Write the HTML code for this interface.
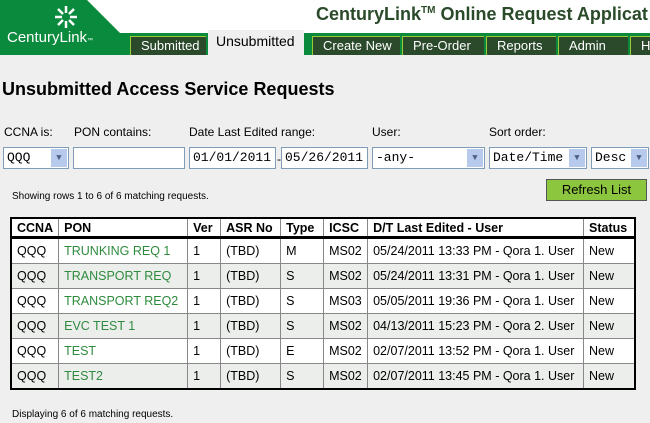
<!DOCTYPE html>
<html><head><style>
body{margin:0;width:650px;height:423px;overflow:hidden;background:#efefef;font-family:"Liberation Sans",Arial,sans-serif;position:relative}
.a{position:absolute}
.tab{position:absolute;top:36px;height:19px;background:#2b4a2b;color:#fff;font-size:13px;line-height:17px;padding-left:10px;box-sizing:border-box;border-top:1px solid #9c3;border-left:1px solid #9c3}
.lbl{position:absolute;top:124px;font-size:12px;color:#000}
.inp{position:absolute;top:147px;height:22px;background:#fff;border:1px solid #7f9db9;box-sizing:border-box;font-family:"Liberation Mono",monospace;font-size:13px;line-height:20px;padding-left:3px}
.dd{position:absolute;right:1px;top:1px;width:16px;height:18px;background:#b7c9ec;color:#4d6185;font-size:9px;text-align:center;line-height:18px}
table{position:absolute;left:10px;top:217px;border-collapse:collapse;font-size:12.5px;width:626px;border:2px solid #000}
td,th{border:1px solid #888;padding:0 5px;text-align:left;height:24px}
th{height:17px;font-weight:bold;border-bottom:3px solid #000;background:#fff}
tr.w td{background:#fff}
tr.g td{background:#eceeec}
td.p{color:#2e8b3e}
</style></head><body>
<div class="a" style="left:0;top:0;width:650px;height:55px;background:#fff"></div>
<svg class="a" style="left:0;top:0" width="650" height="56"><polygon points="0,0 87,0 120,33 650,33 650,55 0,55" fill="#0a8a3c"/></svg>
<svg class="a" style="left:54px;top:5px" width="24" height="24" viewBox="-12 -12 24 24"><g stroke="#fff" stroke-width="2.5">
<line x1="0" y1="-4" x2="0" y2="-11"/><line x1="0" y1="4" x2="0" y2="11"/><line x1="-4" y1="0" x2="-11" y2="0"/><line x1="4" y1="0" x2="11" y2="0"/>
<line x1="3" y1="-3" x2="8" y2="-8"/><line x1="-3" y1="3" x2="-8" y2="8"/><line x1="-3" y1="-3" x2="-8" y2="-8"/><line x1="3" y1="3" x2="8" y2="8"/></g></svg>
<div class="a" style="left:7px;top:29px;color:#fff;font-size:15px">CenturyLink<span style="font-size:6px">™</span></div>
<div class="a" style="left:316px;top:4px;color:#2a4a2a;font-size:18px;font-weight:bold;white-space:nowrap">CenturyLink<sup style="font-size:10px">TM</sup> Online Request Applicat</div>
<div class="tab" style="left:130px;width:76px">Submitted</div>
<div class="tab" style="left:208px;top:30px;height:25px;width:96px;background:#efefef;color:#000;border:none;padding-left:8px;font-size:14px;line-height:22px">Unsubmitted</div>
<div class="tab" style="left:312px;width:88px">Create New</div>
<div class="tab" style="left:402px;width:82px">Pre-Order</div>
<div class="tab" style="left:486px;width:70px">Reports</div>
<div class="tab" style="left:558px;width:70px">Admin</div>
<div class="tab" style="left:630px;width:30px">Help</div>
<div class="a" style="left:2px;top:79px;font-size:18px;font-weight:bold">Unsubmitted Access Service Requests</div>
<div class="lbl" style="left:4px;top:125px">CCNA is:</div>
<div class="lbl" style="left:74px;top:125px">PON contains:</div>
<div class="lbl" style="left:189px;top:125px">Date Last Edited range:</div>
<div class="lbl" style="left:372px;top:125px">User:</div>
<div class="lbl" style="left:489px;top:125px">Sort order:</div>
<div class="inp" style="left:3px;width:66px">QQQ<div class="dd">▼</div></div>
<div class="inp" style="left:73px;width:112px"></div>
<div class="inp" style="left:189px;width:87px">01/01/2011</div>
<div class="a" style="left:277px;top:152px;font-size:12px">-</div>
<div class="inp" style="left:281px;width:87px">05/26/2011</div>
<div class="inp" style="left:372px;width:113px">-any-<div class="dd">▼</div></div>
<div class="inp" style="left:489px;width:98px">Date/Time<div class="dd">▼</div></div>
<div class="inp" style="left:591px;width:58px">Desc<div class="dd">▼</div></div>
<div class="a" style="left:12px;top:191px;font-size:10px">Showing rows 1 to 6 of 6 matching requests.</div>
<div class="a" style="left:546px;top:179px;width:101px;height:22px;background:#8cc63f;border:1px solid #555;box-sizing:border-box;font-size:13px;text-align:center;line-height:20px">Refresh List</div>
<table>
<tr><th style="width:36px">CCNA</th><th style="width:118px">PON</th><th style="width:22px">Ver</th><th style="width:49px">ASR No</th><th style="width:32px">Type</th><th style="width:33px">ICSC</th><th>D/T Last Edited - User</th><th style="width:40px">Status</th></tr>
<tr class="w"><td>QQQ</td><td class="p">TRUNKING REQ 1</td><td>1</td><td>(TBD)</td><td>M</td><td>MS02</td><td>05/24/2011 13:33 PM - Qora 1. User</td><td>New</td></tr>
<tr class="g"><td>QQQ</td><td class="p">TRANSPORT REQ</td><td>1</td><td>(TBD)</td><td>S</td><td>MS02</td><td>05/24/2011 13:31 PM - Qora 1. User</td><td>New</td></tr>
<tr class="w"><td>QQQ</td><td class="p">TRANSPORT REQ2</td><td>1</td><td>(TBD)</td><td>S</td><td>MS03</td><td>05/05/2011 19:36 PM - Qora 1. User</td><td>New</td></tr>
<tr class="g"><td>QQQ</td><td class="p">EVC TEST 1</td><td>1</td><td>(TBD)</td><td>S</td><td>MS02</td><td>04/13/2011 15:23 PM - Qora 2. User</td><td>New</td></tr>
<tr class="w"><td>QQQ</td><td class="p">TEST</td><td>1</td><td>(TBD)</td><td>E</td><td>MS02</td><td>02/07/2011 13:52 PM - Qora 1. User</td><td>New</td></tr>
<tr class="g"><td>QQQ</td><td class="p">TEST2</td><td>1</td><td>(TBD)</td><td>S</td><td>MS02</td><td>02/07/2011 13:45 PM - Qora 1. User</td><td>New</td></tr>
</table>
<div class="a" style="left:12px;top:409px;font-size:10px">Displaying 6 of 6 matching requests.</div>
</body></html>
